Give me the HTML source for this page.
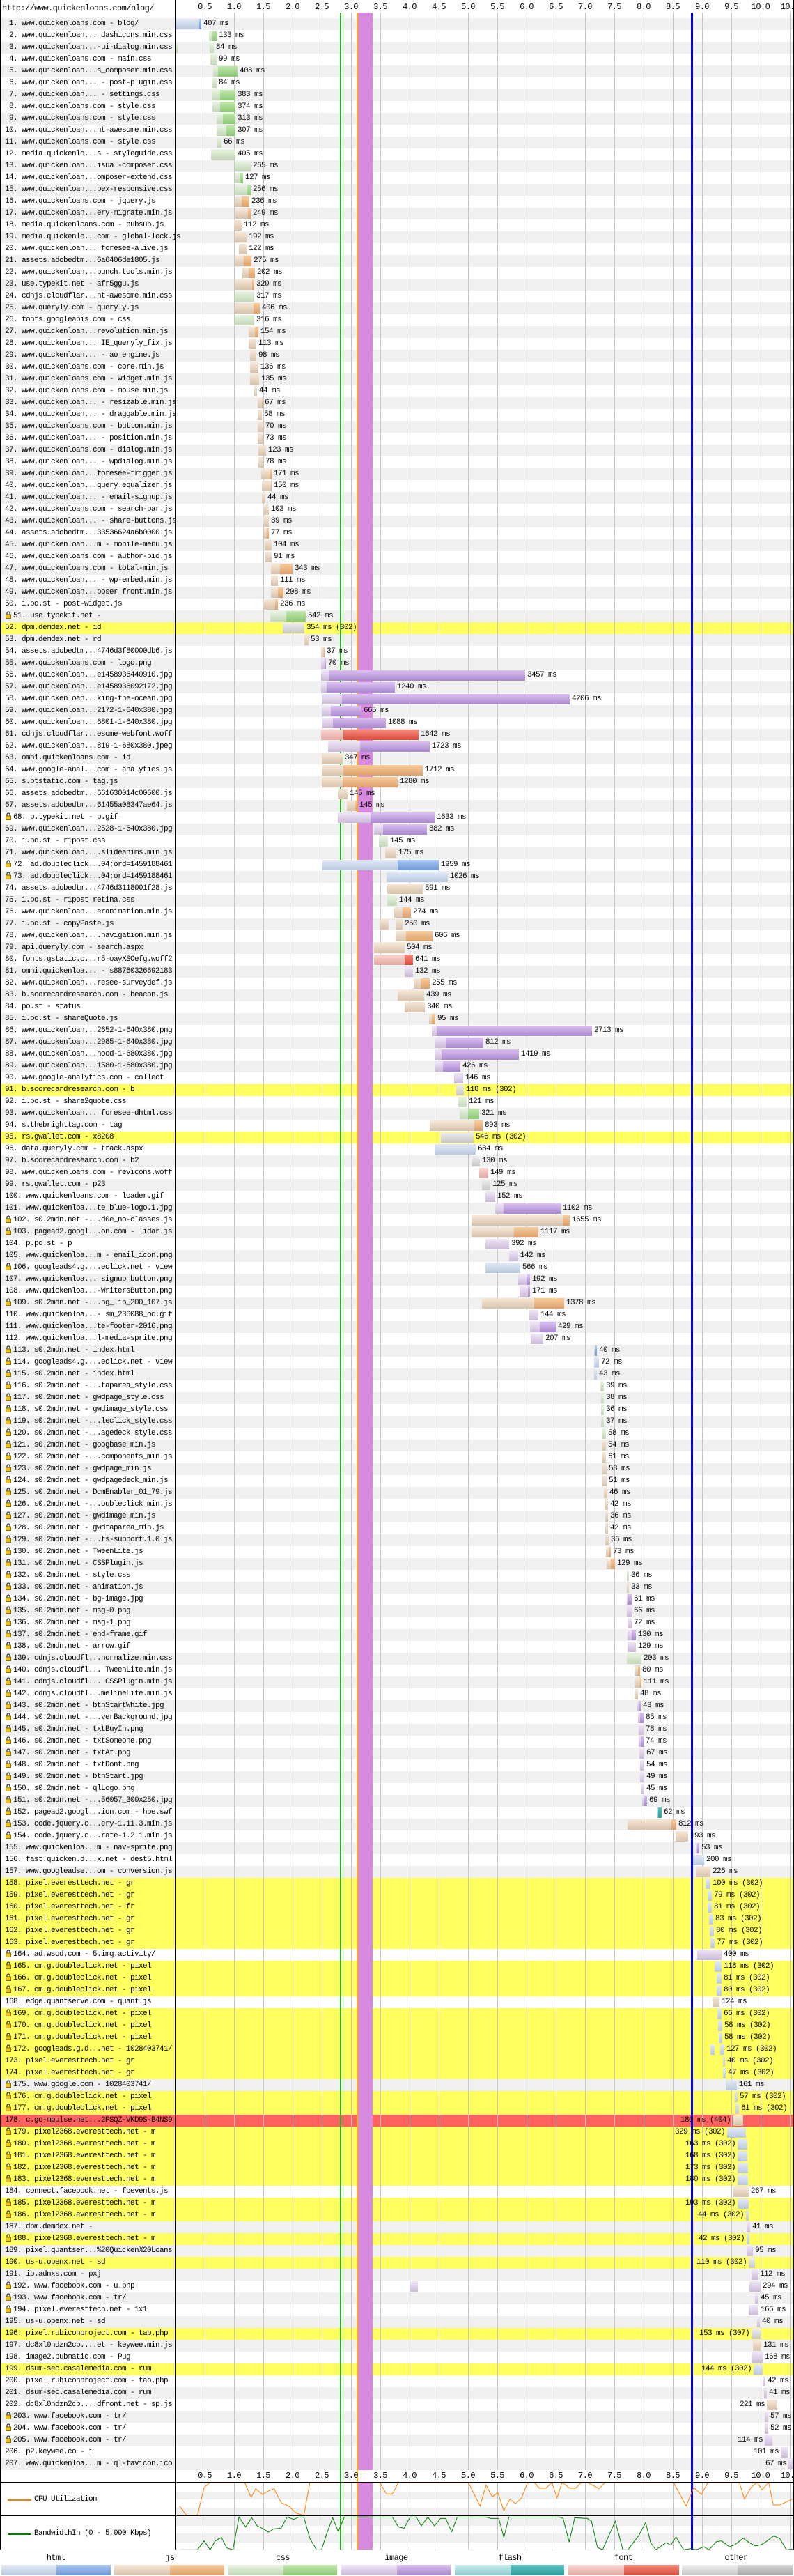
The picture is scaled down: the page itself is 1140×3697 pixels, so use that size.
<!DOCTYPE html>
<html><head><meta charset="utf-8">
<style>
*{margin:0;padding:0;box-sizing:border-box}
html,body{width:1140px;height:3697px;background:#fff;overflow:hidden}
body{position:relative;font-family:"Liberation Mono",monospace;font-size:11px;letter-spacing:-0.6px;color:#000}
.a{position:absolute}
.row{position:absolute;left:0;width:1140px;height:17px;z-index:1}
.lab{position:absolute;left:7px;top:0;line-height:17px;white-space:pre;z-index:8}
.lk{display:inline-block;width:8px;height:11px;vertical-align:-2px;margin-right:3px}
.g{position:absolute;width:1px;background:#c4c4c4;z-index:2}
.bar{position:absolute;height:15px;z-index:6}
.t{position:absolute;line-height:17px;white-space:pre;z-index:7}
</style></head><body>
<div id="root"></div>
<script>
(function(){
var C={
h:['linear-gradient(#e2eaf6,#b9c9e0)','linear-gradient(#a9c8f2,#6d98d8)'],
j:['linear-gradient(#f6e8d8,#d8c2aa)','linear-gradient(#f8cc9c,#dca06a)'],
c:['linear-gradient(#e8f4e2,#c2d8b6)','linear-gradient(#bfe8aa,#8cc874)'],
i:['linear-gradient(#f0e6f8,#cbbad8)','linear-gradient(#dcc0f2,#a888cc)'],
f:['linear-gradient(#fad4d0,#e2a8a2)','linear-gradient(#fa8a7a,#d44c3c)'],
o:['linear-gradient(#eeeeee,#c6c6c6)','linear-gradient(#d4d4d4,#a8a8a8)'],
l:['linear-gradient(#c8ecec,#8ccccc)','linear-gradient(#5cc4c4,#2e9a9a)']};
var Q="www.quickenloan",S="s0.2mdn.net - ",P="pixel.everesttech.net - gr",CM="cm.g.doubleclick.net - pixel",PX="pixel2368.everesttech.net - m",FB="www.facebook.com - tr/";
var R=[
["www.quickenloans.com - blog/","h",252,286,289,"407 ms"],
[Q+"... dashicons.min.css","c",300,305,311,"133 ms"],
[Q+"...-ui-dialog.min.css","c",301,307,307,"84 ms","",[253,256]],
["www.quickenloans.com - main.css","c",302,311,311,"99 ms"],
[Q+"...s_composer.min.css","c",306,313,341,"408 ms"],
[Q+"... - post-plugin.css","c",304,311,311,"84 ms"],
[Q+"... - settings.css","c",304,316,338,"383 ms"],
["www.quickenloans.com - style.css","c",305,316,338,"374 ms"],
["www.quickenloans.com - style.css","c",311,320,338,"313 ms"],
[Q+"...nt-awesome.min.css","c",311,325,338,"307 ms"],
["www.quickenloans.com - style.css","c",312,318,318,"66 ms"],
["media.quickenlo...s - styleguide.css","c",303,338,338,"405 ms"],
[Q+"...isual-composer.css","c",337,360,360,"265 ms"],
[Q+"...omposer-extend.css","c",337,345,349,"127 ms"],
[Q+"...pex-responsive.css","c",337,355,360,"256 ms"],
["www.quickenloans.com - jquery.js","j",337,347,358,"236 ms"],
[Q+"...ery-migrate.min.js","j",338,356,360,"249 ms"],
["media.quickenloans.com - pubsub.js","j",336,347,347,"112 ms"],
["media.quickenlo...com - global-lock.js","j",337,354,354,"192 ms"],
[Q+"... foresee-alive.js","j",343,354,354,"122 ms"],
["assets.adobedtm...6a6406de1805.js","j",337,350,361,"275 ms"],
[Q+"...punch.tools.min.js","j",348,357,366,"202 ms"],
["use.typekit.net - afr5ggu.js","j",337,362,365,"320 ms"],
["cdnjs.cloudflar...nt-awesome.min.css","c",337,365,365,"317 ms"],
["www.queryly.com - queryly.js","j",337,364,373,"406 ms"],
["fonts.googleapis.com - css","c",337,365,365,"316 ms"],
[Q+"...revolution.min.js","j",357,366,371,"154 ms"],
[Q+"... IE_queryly_fix.js","j",357,368,368,"113 ms"],
[Q+"... - ao_engine.js","j",359,368,368,"98 ms"],
["www.quickenloans.com - core.min.js","j",359,371,371,"136 ms"],
["www.quickenloans.com - widget.min.js","j",359,372,372,"135 ms"],
["www.quickenloans.com - mouse.min.js","j",365,369,369,"44 ms"],
[Q+"... - resizable.min.js","j",370,376,377,"67 ms"],
[Q+"... - draggable.min.js","j",370,376,376,"58 ms"],
["www.quickenloans.com - button.min.js","j",370,378,378,"70 ms"],
[Q+"... - position.min.js","j",370,378,378,"73 ms"],
["www.quickenloans.com - dialog.min.js","j",371,382,382,"123 ms"],
[Q+"... - wpdialog.min.js","j",371,378,378,"78 ms"],
[Q+"...foresee-trigger.js","j",375,387,390,"171 ms"],
[Q+"...query.equalizer.js","j",376,389,390,"150 ms"],
[Q+"... - email-signup.js","j",376,381,381,"44 ms"],
["www.quickenloans.com - search-bar.js","j",378,386,386,"103 ms"],
[Q+"... - share-buttons.js","j",378,386,386,"89 ms"],
["assets.adobedtm...33536624a6b0000.js","j",379,383,386,"77 ms"],
[Q+"...m - mobile-menu.js","j",380,390,390,"104 ms"],
["www.quickenloans.com - author-bio.js","j",381,390,390,"91 ms"],
["www.quickenloans.com - total-min.js","j",389,402,420,"343 ms"],
[Q+"... - wp-embed.min.js","j",389,399,399,"111 ms"],
[Q+"...poser_front.min.js","j",389,399,407,"208 ms"],
["i.po.st - post-widget.js","j",378,395,399,"236 ms"],
["use.typekit.net -","c",388,411,439,"542 ms","L"],
["dpm.demdex.net - id","o",406,437,437,"354 ms (302)"],
["dpm.demdex.net - rd","j",437,443,443,"53 ms"],
["assets.adobedtm...4746d3f80000db6.js","j",461,465,466,"37 ms"],
["www.quickenloans.com - logo.png","i",461,466,468,"70 ms"],
[Q+"...e1458936440910.jpg","i",461,472,754,"3457 ms"],
[Q+"...e1458936092172.jpg","i",461,469,567,"1240 ms"],
[Q+"...king-the-ocean.jpg","i",462,491,818,"4206 ms"],
[Q+"...2172-1-640x380.jpg","i",462,475,519,"665 ms"],
[Q+"...6801-1-640x380.jpg","i",462,478,554,"1088 ms"],
["cdnjs.cloudflar...esome-webfont.woff","f",461,493,601,"1642 ms"],
[Q+"...819-1-680x380.jpeg","i",471,517,617,"1723 ms"],
["omni.quickenloans.com - id","j",462,492,492,"347 ms"],
["www.google-anal...com - analytics.js","j",462,493,607,"1712 ms"],
["s.btstatic.com - tag.js","j",462,492,571,"1280 ms"],
["assets.adobedtm...661630014c00600.js","j",486,499,499,"145 ms"],
["assets.adobedtm...61455a08347ae64.js","j",498,510,513,"145 ms"],
["p.typekit.net - p.gif","i",485,532,624,"1633 ms","L"],
[Q+"...2528-1-640x380.jpg","i",537,550,613,"882 ms"],
["i.po.st - r1post.css","c",544,557,557,"145 ms"],
[Q+"....slideanims.min.js","j",553,569,569,"175 ms"],
["ad.doubleclick...04;ord=1459188461","h",462,571,630,"1959 ms","L"],
["ad.doubleclick...04;ord=1459188461","h",555,643,643,"1026 ms","L"],
["assets.adobedtm...4746d3118001f28.js","j",556,607,607,"591 ms"],
["i.po.st - r1post_retina.css","c",556,570,570,"144 ms"],
[Q+"...eranimation.min.js","j",566,578,590,"274 ms"],
["i.po.st - copyPaste.js","j",568,578,578,"250 ms","",[545,558]],
[Q+"....navigation.min.js","j",568,583,621,"606 ms"],
["api.queryly.com - search.aspx","j",537,581,581,"504 ms"],
["fonts.gstatic.c...r5-oayXSOefg.woff2","f",537,581,593,"641 ms"],
["omni.quickenloa... - s88760326692183","i",581,593,593,"132 ms"],
[Q+"...resee-surveydef.js","j",594,604,617,"255 ms"],
["b.scorecardresearch.com - beacon.js","j",571,609,609,"439 ms"],
["po.st - status","j",581,610,610,"340 ms"],
["i.po.st - shareQuote.js","j",616,620,625,"95 ms"],
[Q+"...2652-1-640x380.png","i",620,627,850,"2713 ms"],
[Q+"...2985-1-640x380.jpg","i",624,640,694,"812 ms"],
[Q+"...hood-1-680x380.jpg","i",624,634,745,"1419 ms"],
[Q+"...1580-1-680x380.jpg","i",624,636,661,"426 ms"],
["www.google-analytics.com - collect","i",652,665,665,"146 ms"],
["b.scorecardresearch.com - b","o",655,666,666,"118 ms (302)"],
["i.po.st - share2quote.css","c",658,670,670,"121 ms"],
[Q+"... foresee-dhtml.css","c",660,672,688,"321 ms"],
["s.thebrighttag.com - tag","j",617,681,693,"893 ms"],
["rs.gwallet.com - x8208","o",633,680,680,"546 ms (302)"],
["data.queryly.com - track.aspx","h",624,683,683,"684 ms"],
["b.scorecardresearch.com - b2","o",677,689,689,"130 ms"],
["www.quickenloans.com - revicons.woff","f",688,701,701,"149 ms"],
["rs.gwallet.com - p23","o",692,704,704,"125 ms"],
["www.quickenloans.com - loader.gif","i",697,711,711,"152 ms"],
["www.quickenloa...te_blue-logo.1.jpg","i",711,723,805,"1102 ms"],
["s0.2mdn.net -...d0e_no-classes.js","j",677,808,818,"1655 ms","L"],
["pagead2.googl...on.com - lidar.js","j",677,738,773,"1117 ms","L"],
["p.po.st - p","i",697,731,731,"392 ms"],
["www.quickenloa...m - email_icon.png","i",731,744,744,"142 ms"],
["googleads4.g....eclick.net - view","h",697,747,747,"566 ms","L"],
["www.quickenloa... signup_button.png","i",744,756,761,"192 ms"],
["www.quickenloa...-WritersButton.png","i",746,758,761,"171 ms"],
["s0.2mdn.net -...ng_lib_200_107.js","j",692,767,810,"1378 ms","L"],
["www.quickenloa...- sm_236088_oo.gif","i",760,773,773,"144 ms"],
["www.quickenloa...te-footer-2016.png","i",761,775,798,"429 ms"],
["www.quickenloa...l-media-sprite.png","i",762,780,780,"207 ms"],
[S+"index.html","h",853,855,857,"40 ms","L"],
["googleads4.g....eclick.net - view","h",853,860,860,"72 ms","L"],
[S+"index.html","h",853,857,857,"43 ms","L"],
["s0.2mdn.net -...taparea_style.css","c",862,867,867,"39 ms","L"],
[S+"gwdpage_style.css","c",863,867,867,"38 ms","L"],
[S+"gwdimage_style.css","c",863,867,867,"36 ms","L"],
["s0.2mdn.net -...leclick_style.css","c",863,867,867,"37 ms","L"],
["s0.2mdn.net -...agedeck_style.css","c",864,870,870,"58 ms","L"],
[S+"googbase_min.js","j",864,870,870,"54 ms","L"],
["s0.2mdn.net -...components_min.js","j",864,870,870,"61 ms","L"],
[S+"gwdpage_min.js","j",865,871,871,"58 ms","L"],
[S+"gwdpagedeck_min.js","j",865,871,871,"51 ms","L"],
[S+"DcmEnabler_01_79.js","j",867,872,872,"46 ms","L"],
["s0.2mdn.net -...oubleclick_min.js","j",868,873,873,"42 ms","L"],
[S+"gwdimage_min.js","j",869,873,873,"36 ms","L"],
[S+"gwdtaparea_min.js","j",869,873,873,"42 ms","L"],
["s0.2mdn.net -...ts-support.1.0.js","j",869,874,874,"36 ms","L"],
[S+"TweenLite.js","j",870,875,877,"73 ms","L"],
[S+"CSSPlugin.js","j",871,877,883,"129 ms","L"],
[S+"style.css","c",900,903,903,"36 ms","L"],
[S+"animation.js","j",900,903,903,"33 ms","L"],
[S+"bg-image.jpg","i",900,901,907,"61 ms","L"],
[S+"msg-0.png","i",900,907,907,"66 ms","L"],
[S+"msg-1.png","i",901,907,907,"72 ms","L"],
[S+"end-frame.gif","i",901,907,913,"130 ms","L"],
[S+"arrow.gif","i",901,913,913,"129 ms","L"],
["cdnjs.cloudfl...normalize.min.css","c",900,921,921,"203 ms","L"],
["cdnjs.cloudfl... TweenLite.min.js","j",911,916,919,"80 ms","L"],
["cdnjs.cloudfl... CSSPlugin.min.js","j",911,919,921,"111 ms","L"],
["cdnjs.cloudfl...melineLite.min.js","j",911,916,916,"48 ms","L"],
[S+"btnStartWhite.jpg","i",915,917,920,"43 ms","L"],
["s0.2mdn.net -...verBackground.jpg","i",916,919,924,"85 ms","L"],
[S+"txtBuyIn.png","i",917,924,924,"78 ms","L"],
[S+"txtSomeone.png","i",917,920,924,"74 ms","L"],
[S+"txtAt.png","i",918,925,925,"67 ms","L"],
[S+"txtDont.png","i",919,925,925,"54 ms","L"],
[S+"btnStart.jpg","i",919,925,925,"49 ms","L"],
[S+"qlLogo.png","i",920,925,925,"45 ms","L"],
["s0.2mdn.net -...56057_300x250.jpg","i",922,925,929,"69 ms","L"],
["pagead2.googl...ion.com - hbe.swf","l",944,945,950,"62 ms","L"],
["code.jquery.c...ery-1.11.3.min.js","j",901,964,971,"812 ms","L"],
["code.jquery.c...rate-1.2.1.min.js","j",970,988,988,"193 ms","L"],
["www.quickenloa...m - nav-sprite.png","i",999,1001,1004,"53 ms"],
["fast.quicken.d...x.net - dest5.html","h",995,1011,1011,"200 ms"],
["www.googleadse...om - conversion.js","j",1000,1020,1020,"226 ms"],
[P,"h",1013,1020,1020,"100 ms (302)"],
[P,"h",1016,1022,1022,"79 ms (302)"],
["pixel.everesttech.net - fr","h",1016,1022,1022,"81 ms (302)"],
[P,"h",1018,1024,1024,"83 ms (302)"],
[P,"h",1019,1025,1025,"80 ms (302)"],
[P,"h",1020,1026,1026,"77 ms (302)"],
["ad.wsod.com - 5.img.activity/","i",1001,1036,1036,"400 ms","L"],
[CM,"h",1026,1036,1036,"118 ms (302)","L"],
[CM,"h",1029,1036,1036,"81 ms (302)","L"],
[CM,"h",1029,1036,1036,"80 ms (302)","L"],
["edge.quantserve.com - quant.js","j",1023,1033,1033,"124 ms"],
[CM,"h",1030,1036,1036,"66 ms (302)","L"],
[CM,"h",1031,1037,1037,"58 ms (302)","L"],
[CM,"h",1032,1037,1037,"58 ms (302)","L"],
["googleads.g.d...net - 1028403741/","h",1034,1040,1040,"127 ms (302)","L",[1020,1026]],
[P,"h",1038,1041,1041,"40 ms (302)"],
[P,"h",1038,1042,1042,"47 ms (302)"],
["www.google.com - 1028403741/","h",1042,1058,1058,"161 ms","L"],
[CM,"h",1055,1059,1059,"57 ms (302)","L"],
[CM,"h",1056,1061,1061,"61 ms (302)","L"],
["c.go-mpulse.net...2PSQZ-VKD9S-B4NS9","j",1052,1067,1067,"180 ms (404)","B"],
[PX,"h",1044,1071,1071,"329 ms (302)","BL"],
[PX,"h",1059,1073,1073,"163 ms (302)","BL"],
[PX,"h",1059,1073,1073,"168 ms (302)","BL"],
[PX,"h",1059,1074,1074,"173 ms (302)","BL"],
[PX,"h",1059,1074,1074,"180 ms (302)","BL"],
["connect.facebook.net - fbevents.js","j",1053,1075,1075,"267 ms"],
[PX,"h",1059,1075,1075,"193 ms (302)","BL"],
[PX,"h",1071,1075,1075,"44 ms (302)","BL"],
["dpm.demdex.net -","i",1072,1077,1077,"41 ms"],
[PX,"h",1072,1076,1076,"42 ms (302)","BL"],
["pixel.quantser...%20Quicken%20Loans","i",1072,1081,1081,"95 ms"],
["us-u.openx.net - sd","o",1075,1084,1084,"110 ms (302)","B"],
["ib.adnxs.com - pxj","i",1079,1088,1088,"112 ms"],
["www.facebook.com - u.php","i",1076,1092,1092,"294 ms","L",[589,600]],
[FB,"i",1084,1089,1089,"45 ms","L"],
["pixel.everesttech.net - 1x1","i",1075,1089,1089,"166 ms","L"],
["us-u.openx.net - sd","i",1087,1091,1091,"40 ms"],
["pixel.rubiconproject.com - tap.php","o",1079,1093,1093,"153 ms (307)","B"],
["dc8xl0ndzn2cb....et - keywee.min.js","j",1081,1093,1093,"131 ms"],
["image2.pubmatic.com - Pug","i",1079,1095,1095,"168 ms"],
["dsum-sec.casalemedia.com - rum","h",1082,1095,1095,"144 ms (302)","B"],
["pixel.rubiconproject.com - tap.php","i",1095,1099,1099,"42 ms"],
["dsum-sec.casalemedia.com - rum","i",1097,1101,1101,"41 ms"],
["dc8xl0ndzn2cb....dfront.net - sp.js","j",1101,1116,1116,"221 ms","B"],
[FB,"i",1098,1103,1103,"57 ms","L"],
[FB,"i",1098,1103,1103,"52 ms","L"],
[FB,"i",1098,1109,1109,"114 ms","BL"],
["p2.keywee.co - i","i",1121,1131,1131,"101 ms","B"],
["www.quickenloa...m - ql-favicon.ico","i",1132,1139,1139,"67 ms","B"]
];
var Y=[52,91,95,158,159,160,161,162,163,165,166,167,169,170,171,172,173,174,176,177,179,180,181,182,183,185,186,188,190,196,199];
var lock='<svg class="lk" viewBox="0 0 8 11"><path d="M2 5V3a2 2 0 0 1 4 0v2" fill="none" stroke="#333" stroke-width="1.2"/><rect x="0.5" y="5" width="7" height="5.5" fill="#f5c400" stroke="#6a5000" stroke-width="0.8"/></svg>';
var h='';
for(var i=0;i<R.length;i++){
 var r=R[i],n=i+1,ty=26+i*17,f=r[6]||'';
 var bg=(n==178)?'#ff6060':(Y.indexOf(n)>=0?'#ffff60':(n%2?'#f0f0f0':'#fff'));
 h+='<div class="row" style="top:'+ty+'px;background:'+bg+'"></div>';
 var num=(n<10?' ':'')+n+'. ';
 var L=f.indexOf('L')>=0;
 h+='<div class="lab" style="top:'+ty+'px;left:'+(L?8:7)+'px">'+(L?lock:'')+num+r[0]+'</div>';
 var s=r[2],d=r[3],e=r[4],col=C[r[1]];
 if(d>s)h+='<div class="bar" style="top:'+(ty+1)+'px;left:'+s+'px;width:'+(d-s)+'px;background:'+col[0]+'"></div>';
 if(e>d)h+='<div class="bar" style="top:'+(ty+1)+'px;left:'+d+'px;width:'+(e-d)+'px;background:'+col[1]+'"></div>';
 if(r[7])h+='<div class="bar" style="top:'+(ty+1)+'px;left:'+r[7][0]+'px;width:'+(r[7][1]-r[7][0])+'px;background:'+col[0]+'"></div>';
 if(f.indexOf('B')>=0)h+='<div class="t" style="top:'+ty+'px;right:'+(1140-s+3)+'px">'+r[5]+'</div>';
 else h+='<div class="t" style="top:'+ty+'px;left:'+(e+3)+'px">'+r[5]+'</div>';
}
for(var k=1;k<=21;k++){
 var x=252+42*k,lbl=(k/2).toFixed(1);
 h+='<div class="g" style="left:'+x+'px;top:18px;height:3527px"></div>';
 h+='<div class="g" style="left:'+x+'px;top:3563px;height:97px"></div>';
 h+='<div class="t" style="top:2px;left:'+(x-15)+'px;width:30px;text-align:center;font-size:12px">'+lbl+'</div>';
 h+='<div class="t" style="top:3545px;left:'+(x-15)+'px;width:30px;text-align:center;font-size:12px">'+lbl+'</div>';
}
document.getElementById('root').innerHTML=h;
})();
</script>
<div class="a" style="left:3px;top:4px;font-size:12px;line-height:17px;z-index:8">http://www.quickenloans.com/blog/</div>
<div class="a" style="left:252px;top:3576px;width:887px;height:11px;background:#f0f0f0;z-index:1"></div>
<div class="a" style="left:252px;top:3599px;width:887px;height:11px;background:#f0f0f0;z-index:1"></div>
<div class="a" style="left:252px;top:3612px;width:887px;height:13px;background:#f0f0f0;z-index:1"></div>
<div class="a" style="left:252px;top:3636px;width:887px;height:13px;background:#f0f0f0;z-index:1"></div>
<div class="a" style="left:514px;top:18px;width:21px;height:3527px;background:#d88adf;z-index:3"></div>
<div class="a" style="left:514px;top:3563px;width:21px;height:97px;background:#d88adf;z-index:3"></div>
<div class="a" style="left:488px;top:18px;width:2px;height:3642px;background:#28b020;z-index:5"></div>
<div class="a" style="left:492px;top:18px;width:1px;height:3642px;background:#70c060;z-index:5"></div>
<div class="a" style="left:512px;top:18px;width:2px;height:3642px;background:#ffb000;z-index:5"></div>
<div class="a" style="left:992px;top:18px;width:3px;height:3642px;background:#0000ff;z-index:5"></div>
<svg class="a" style="left:0;top:3380px;z-index:6" width="1140" height="317" viewBox="0 0 1568 951" preserveAspectRatio="none">
<polyline vector-effect="non-scaling-stroke" fill="none" stroke="#ff8000" stroke-width="1" points="355,650 368,690 390,690 403,570 415,548 483,548 496,612 505,575 518,600 530,585 541,575 555,635 570,650 585,680 600,690 612,548 750,548 763,598 775,598 787,548 925,548 948,650 960,560 972,610 983,592 995,670 1007,620 1018,640 1030,615 1042,548 1055,548 1065,573 1078,573 1090,548 1100,615 1110,548 1125,573 1137,573 1148,548 1160,548 1183,575 1195,548 1330,548 1355,650 1370,570 1385,600 1398,548 1460,548 1470,620 1483,570 1495,548 1505,580 1518,548 1527,645 1540,645 1565,620"/>
<polyline vector-effect="non-scaling-stroke" fill="none" stroke="#008000" stroke-width="1" points="355,838 390,838 403,800 415,838 425,800 437,785 448,830 460,838 472,697 485,740 497,700 508,735 520,748 530,762 541,748 555,745 567,697 580,707 590,697 600,697 612,790 625,838 635,838 645,770 657,700 668,760 680,697 775,697 787,740 798,745 810,697 822,697 832,735 845,697 858,735 870,703 880,703 892,760 903,697 960,697 970,703 985,703 995,785 1005,697 1105,697 1112,703 1124,805 1135,700 1160,703 1168,715 1180,828 1190,838 1215,715 1230,838 1240,838 1262,775 1275,720 1285,808 1295,838 1315,808 1325,818 1335,783 1350,838 1365,833 1375,838 1390,825 1400,838 1415,803 1425,800 1440,825 1450,818 1468,788 1480,808 1492,822 1505,815 1515,800 1528,778 1540,790 1553,838 1565,835"/>
</svg>
<div class="a" style="left:11px;top:3587px;width:34px;height:2px;background:#ff8000"></div>
<div class="a" style="left:49px;top:3579px;line-height:17px">CPU Utilization</div>
<div class="a" style="left:11px;top:3636px;width:34px;height:2px;background:#008000"></div>
<div class="a" style="left:49px;top:3628px;line-height:17px">BandwidthIn (0 - 5,000 Kbps)</div>
<div class="a" style="left:0;top:0;width:1px;height:3660px;background:#000;z-index:9"></div>
<div class="a" style="left:1139px;top:0;width:1px;height:3660px;background:#000;z-index:9"></div>
<div class="a" style="left:251px;top:0;width:1px;height:3660px;background:#000;z-index:9"></div>
<div class="a" style="left:0;top:3562px;width:1140px;height:1px;background:#000;z-index:9"></div>
<div class="a" style="left:0;top:3610px;width:1140px;height:1px;background:#000;z-index:9"></div>
<div class="a" style="left:0;top:3659px;width:1140px;height:1px;background:#000;z-index:9"></div>
<div class="a" style="left:0;top:3663px;width:1140px;height:17px;font-size:12px;line-height:17px">
<span class="a" style="left:62px;width:36px;text-align:center">html</span>
<span class="a" style="left:226px;width:36px;text-align:center">js</span>
<span class="a" style="left:388px;width:36px;text-align:center">css</span>
<span class="a" style="left:546px;width:46px;text-align:center">image</span>
<span class="a" style="left:709px;width:46px;text-align:center">flash</span>
<span class="a" style="left:877px;width:36px;text-align:center">font</span>
<span class="a" style="left:1034px;width:46px;text-align:center">other</span>
</div>
<div class="a" style="left:2px;top:3681px;width:79px;height:15px;background:linear-gradient(#e2eaf6,#b9c9e0)"></div>
<div class="a" style="left:81px;top:3681px;width:78px;height:15px;background:linear-gradient(#a9c8f2,#6d98d8)"></div>
<div class="a" style="left:164px;top:3681px;width:80px;height:15px;background:linear-gradient(#f6e8d8,#d8c2aa)"></div>
<div class="a" style="left:244px;top:3681px;width:78px;height:15px;background:linear-gradient(#f8cc9c,#dca06a)"></div>
<div class="a" style="left:327px;top:3681px;width:80px;height:15px;background:linear-gradient(#e8f4e2,#c2d8b6)"></div>
<div class="a" style="left:407px;top:3681px;width:77px;height:15px;background:linear-gradient(#bfe8aa,#8cc874)"></div>
<div class="a" style="left:490px;top:3681px;width:80px;height:15px;background:linear-gradient(#f0e6f8,#cbbad8)"></div>
<div class="a" style="left:570px;top:3681px;width:77px;height:15px;background:linear-gradient(#dcc0f2,#a888cc)"></div>
<div class="a" style="left:653px;top:3681px;width:80px;height:15px;background:linear-gradient(#c8ecec,#8ccccc)"></div>
<div class="a" style="left:733px;top:3681px;width:77px;height:15px;background:linear-gradient(#5cc4c4,#2e9a9a)"></div>
<div class="a" style="left:816px;top:3681px;width:80px;height:15px;background:linear-gradient(#fad4d0,#e2a8a2)"></div>
<div class="a" style="left:896px;top:3681px;width:79px;height:15px;background:linear-gradient(#fa8a7a,#d44c3c)"></div>
<div class="a" style="left:979px;top:3681px;width:80px;height:15px;background:linear-gradient(#eeeeee,#c6c6c6)"></div>
<div class="a" style="left:1059px;top:3681px;width:79px;height:15px;background:linear-gradient(#d4d4d4,#a8a8a8)"></div>
</body></html>
